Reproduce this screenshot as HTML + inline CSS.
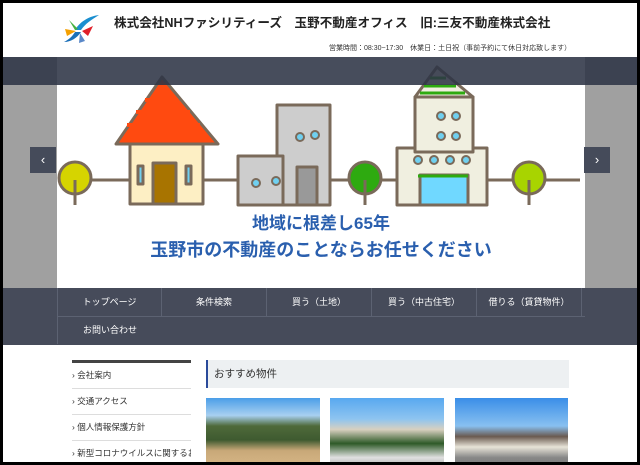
<!DOCTYPE html>
<html><head><meta charset="utf-8"><style>
*{margin:0;padding:0;box-sizing:border-box}
body{width:640px;height:465px;overflow:hidden;background:#000;font-family:"Liberation Sans","Noto Sans CJK JP",sans-serif;position:relative}
#w{position:absolute;left:3px;top:3px;width:634px;height:459px;background:#fff;overflow:hidden}
.a{position:absolute}
</style></head><body><div id="w">
<div class="a" style="left:58px;top:9px">
<svg width="40" height="34" viewBox="0 0 40 34">
<path d="M14 18 C20 8 30 4 38 3 C30 8 24 12 20 18Z" fill="#1a8fd0"/>
<path d="M3 30 C10 30 16 26 20 20 L14 20 C11 25 7 28 3 30Z" fill="#1a6fb8"/>
<path d="M8 8 L17 17 L14 18Z" fill="#46b040"/>
<path d="M4 17 L15 19 L6 24Z" fill="#f5a000"/>
<path d="M21 19 L32 14 L27 24Z" fill="#e0202a"/>
<path d="M19 21 L24 29 L18 31Z" fill="#5a88c8"/>
</svg></div>
<div class="a" style="left:111px;top:9px;font-size:12.6px;font-weight:bold;color:#222;white-space:nowrap">株式会社NHファシリティーズ　玉野不動産オフィス　旧:三友不動産株式会社</div>
<div class="a" style="left:326px;top:40px;font-size:7px;color:#333;white-space:nowrap">営業時間：08:30~17:30　休業日：土日祝（事前予約にて休日対応致します）</div>
<div class="a" style="left:0;top:54px;width:634px;height:231px;background:#a0a0a0"></div>
<div class="a" style="left:54px;top:54px;width:528px;height:231px;background:#fff"></div>
<svg class="a" style="left:0;top:0" width="634" height="285" viewBox="3 3 634 285">
<g stroke="#7a6a5a" stroke-width="3" stroke-linejoin="round">
<line x1="70" y1="180" x2="580" y2="180"/>
<circle cx="75" cy="178" r="16" fill="#d6d400"/><line x1="75" y1="180" x2="75" y2="205"/>
<circle cx="365" cy="178" r="16" fill="#2eaa10"/><line x1="365" y1="180" x2="365" y2="205"/>
<circle cx="529" cy="178" r="16" fill="#a8d400"/><line x1="529" y1="180" x2="529" y2="205"/>
<rect x="130" y="144" width="73" height="60" fill="#fdefc4"/>
<path d="M162 77 L218 144 L116 144Z" fill="#ff4a10"/>
<rect x="153" y="163" width="23" height="41" fill="#a87400"/>
<rect x="138" y="166" width="5" height="18" fill="#70d0f0"/><rect x="186" y="166" width="5" height="18" fill="#70d0f0"/>
<rect x="277" y="105" width="53" height="100" fill="#cdcdcd"/>
<rect x="238" y="156" width="45" height="49" fill="#cdcdcd"/>
<rect x="297" y="167" width="20" height="38" fill="#999"/>
<rect x="397" y="148" width="90" height="57" fill="#f0efe0"/>
<rect x="415" y="97" width="58" height="55" fill="#f0efe0"/>
<path d="M437 67 L473 97 L415 97Z" fill="#f0efe0"/>
<rect x="420" y="175" width="48" height="30" fill="#70d8ff"/>
</g>
<g stroke="#ff4a10" stroke-width="4"><line x1="145" y1="100" x2="178" y2="100"/><line x1="136" y1="112" x2="190" y2="112"/><line x1="127" y1="125" x2="200" y2="125"/></g>
<g stroke="#2eaa10" stroke-width="3"><line x1="430" y1="78" x2="446" y2="78"/><line x1="424" y1="86" x2="456" y2="86"/><line x1="420" y1="93" x2="465" y2="93"/><line x1="418" y1="176" x2="468" y2="176"/></g>
<g fill="#70d0f0" stroke="#7a6a5a" stroke-width="2">
<circle cx="300" cy="137" r="4"/><circle cx="315" cy="135" r="4"/><circle cx="256" cy="183" r="4"/><circle cx="276" cy="181" r="4"/>
<circle cx="441" cy="116" r="4"/><circle cx="456" cy="116" r="4"/><circle cx="441" cy="136" r="4"/><circle cx="456" cy="136" r="4"/>
<circle cx="418" cy="160" r="4"/><circle cx="434" cy="160" r="4"/><circle cx="450" cy="160" r="4"/><circle cx="466" cy="160" r="4"/>
</g>
<rect x="3" y="57" width="634" height="28" fill="#2e3446" opacity="0.88"/>
</svg>
<div class="a" style="left:27px;top:144px;width:26px;height:26px;background:#454b5a;color:#fff;font-size:13px;text-align:center;line-height:26px">‹</div>
<div class="a" style="left:581px;top:144px;width:26px;height:26px;background:#454b5a;color:#fff;font-size:13px;text-align:center;line-height:26px">›</div>
<div class="a" style="left:54px;top:207px;width:528px;text-align:center;font-size:17px;font-weight:bold;color:#2a5fae;line-height:27px">地域に根差し65年<br><span style="font-size:18px">玉野市の不動産のことならお任せください</span></div>
<div class="a" style="left:0;top:285px;width:634px;height:57px;background:#464b5a"></div>
<div class="a" style="left:54px;top:285px;width:528px;height:57px;font-size:9px;color:#fff">
<div style="display:flex;height:29px;border-bottom:1px solid #5c6272">
<div style="width:105px;border-left:1px solid #5c6272;border-right:1px solid #5c6272;text-align:center;line-height:28px">トップページ</div>
<div style="width:105px;border-right:1px solid #5c6272;text-align:center;line-height:28px">条件検索</div>
<div style="width:105px;border-right:1px solid #5c6272;text-align:center;line-height:28px">買う（土地）</div>
<div style="width:105px;border-right:1px solid #5c6272;text-align:center;line-height:28px">買う（中古住宅）</div>
<div style="width:105px;border-right:1px solid #5c6272;text-align:center;line-height:28px">借りる（賃貸物件）</div></div>
<div style="width:105px;height:27px;border-left:1px solid #5c6272;text-align:center;line-height:27px">お問い合わせ</div>
</div>
<div class="a" style="left:69px;top:357px;width:119px;border-top:3px solid #444;font-size:8.5px;color:#333">
<div style="height:26px;line-height:24px;border-bottom:1px solid #ddd">› 会社案内</div>
<div style="height:26px;line-height:24px;border-bottom:1px solid #ddd">› 交通アクセス</div>
<div style="height:26px;line-height:24px;border-bottom:1px solid #ddd">› 個人情報保護方針</div>
<div style="height:26px;line-height:24px;white-space:nowrap;overflow:hidden">› 新型コロナウイルスに関するお</div>
</div>
<div class="a" style="left:203px;top:357px;width:363px;height:28px;background:#edf0f2;border-left:2px solid #2a4a9a;font-size:10.5px;color:#333;line-height:28px;padding-left:6px">おすすめ物件</div>
<div class="a" style="left:203px;top:395px;width:114px;height:70px;background:linear-gradient(#4a9ee8 0,#a8d0f0 25%,#4f6a3a 40%,#3e5a30 60%,#c8a878 75%,#d8b888 100%)"></div>
<div class="a" style="left:327px;top:395px;width:114px;height:70px;background:linear-gradient(#58a8f0 0,#8ec4f0 30%,#d8d0c0 45%,#2e5a28 65%,#e0e0e0 85%,#aaa 100%)"></div>
<div class="a" style="left:452px;top:395px;width:113px;height:70px;background:linear-gradient(#3a8ee8 0,#88c0f0 40%,#6a5a50 55%,#e8e4d8 70%,#888 85%,#777 100%)"></div>
</div></body></html>
